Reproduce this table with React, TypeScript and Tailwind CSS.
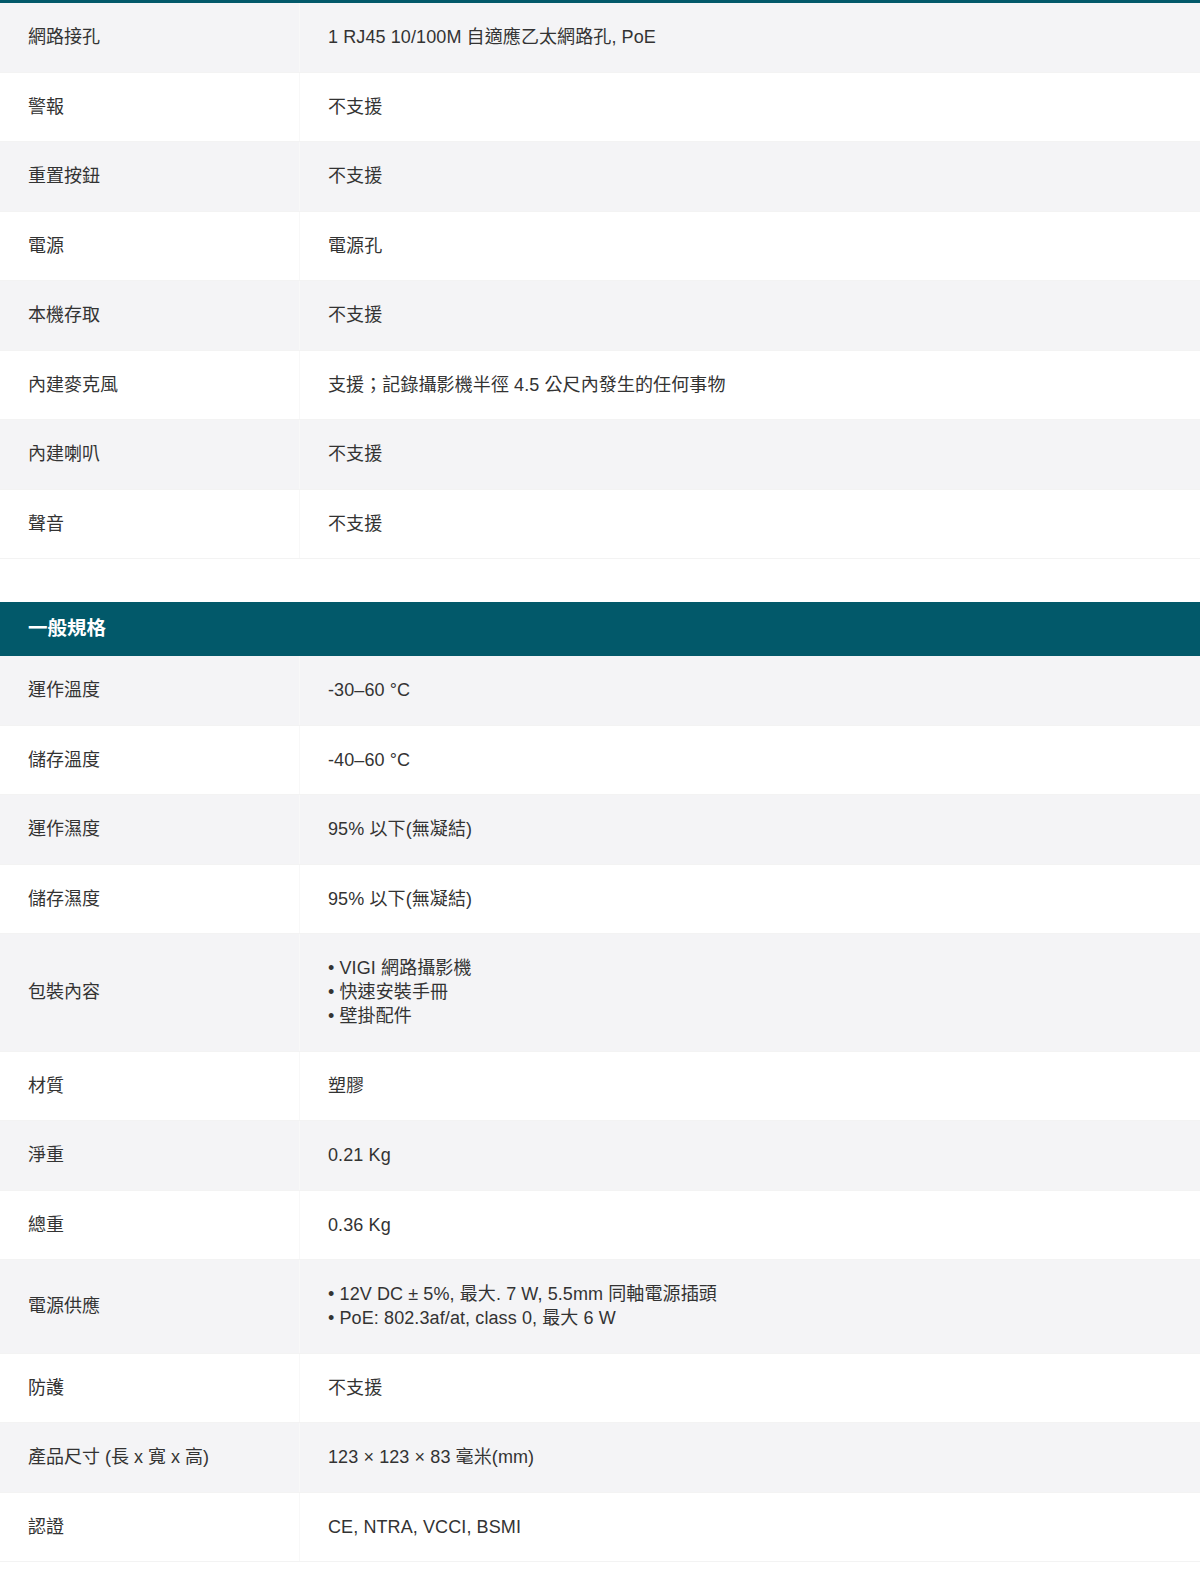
import React from "react";

type Row = { label: string; value: React.ReactNode };

const sec1: Row[] = [
  { label: "網路接孔", value: "1 RJ45 10/100M 自適應乙太網路孔, PoE" },
  { label: "警報", value: "不支援" },
  { label: "重置按鈕", value: "不支援" },
  { label: "電源", value: "電源孔" },
  { label: "本機存取", value: "不支援" },
  { label: "內建麥克風", value: "支援；記錄攝影機半徑 4.5 公尺內發生的任何事物" },
  { label: "內建喇叭", value: "不支援" },
  { label: "聲音", value: "不支援" },
];

const Lines = ({ items }: { items: string[] }) => (
  <div>
    {items.map((t) => (
      <div key={t}>• {t}</div>
    ))}
  </div>
);

const sec2: Row[] = [
  { label: "運作溫度", value: "-30–60 °C" },
  { label: "儲存溫度", value: "-40–60 °C" },
  { label: "運作濕度", value: "95% 以下(無凝結)" },
  { label: "儲存濕度", value: "95% 以下(無凝結)" },
  { label: "包裝內容", value: <Lines items={["VIGI 網路攝影機", "快速安裝手冊", "壁掛配件"]} /> },
  { label: "材質", value: "塑膠" },
  { label: "淨重", value: "0.21 Kg" },
  { label: "總重", value: "0.36 Kg" },
  {
    label: "電源供應",
    value: <Lines items={["12V DC ± 5%, 最大. 7 W, 5.5mm 同軸電源插頭", "PoE: 802.3af/at, class 0, 最大 6 W"]} />,
  },
  { label: "防護", value: "不支援" },
  { label: "產品尺寸 (長 x 寬 x 高)", value: "123 × 123 × 83 毫米(mm)" },
  { label: "認證", value: "CE, NTRA, VCCI, BSMI" },
];

function Table({ rows }: { rows: Row[] }) {
  return (
    <div>
      {rows.map((r, i) => (
        <div
          key={r.label}
          className={`grid grid-cols-[300px_1fr] border-b border-[#f3f3f3] ${i % 2 === 0 ? "bg-[#f4f4f6]" : "bg-white"}`}
        >
          <div className="flex items-center border-r border-[#f8f8f8] pl-[28px] py-[22.25px] leading-[24px]">
            {r.label}
          </div>
          <div className="flex items-center pl-[28px] py-[22.25px] leading-[24px] tracking-[0.1px]">{r.value}</div>
        </div>
      ))}
    </div>
  );
}

export default function App() {
  return (
    <div
      className="w-[1200px] min-h-[1595px] bg-white text-[18px] text-[#333333]"
      style={{ fontFamily: '"Liberation Sans", "Noto Sans CJK TC", Arial, sans-serif' }}
    >
      <div className="h-[3px] bg-[#02596a]" />
      <Table rows={sec1} />
      <div className="h-[43px]" />
      <div className="flex h-[54px] items-center bg-[#02596a] pl-[28px] text-[19.5px] font-bold text-white">
        一般規格
      </div>
      <Table rows={sec2} />
    </div>
  );
}
